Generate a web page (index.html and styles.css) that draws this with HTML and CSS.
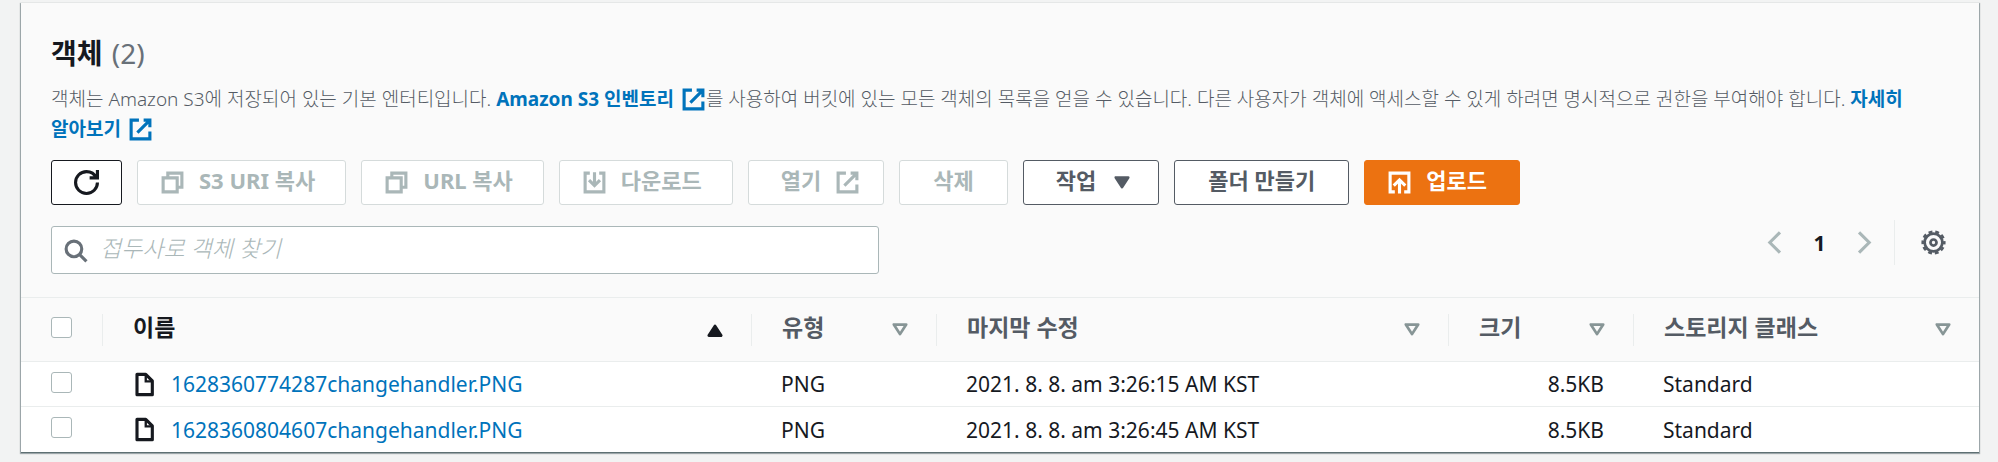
FILE: index.html
```html
<!DOCTYPE html>
<html lang="ko">
<head>
<meta charset="utf-8">
<title>객체</title>
<link rel="stylesheet" href="styles.css">
</head>
<body>
<svg class="sprite" aria-hidden="true">
  <symbol id="i-external" viewBox="0 0 16 16"><path d="M10 2h4v4.500M6 10l8-8M14 9.200V14H2V2h5"/></symbol>
  <symbol id="i-copy" viewBox="0 0 16 16"><path d="M2 5h9v9H2zM5 5V2h9v9h-3"/></symbol>
  <symbol id="i-download" viewBox="0 0 16 16"><path d="M11 2h3v12H2V2h3M8 1.500V10M4.500 6.500 8 10l3.500-3.500"/></symbol>
  <symbol id="i-upload" viewBox="0 0 16 16"><path d="M11 14h3V2H2v12h3M8 15V6.500M4.300 10 8 6.300l3.700 3.700"/></symbol>
  <symbol id="i-refresh" viewBox="0 0 16 16"><path d="M10 5h5V0M15 8c0 3.866-3.134 7-7 7s-7-3.134-7-7 3.134-7 7-7c2.790 0 5.200 1.632 6.327 4"/></symbol>
  <symbol id="i-search" viewBox="0 0 16 16"><circle cx="7" cy="7" r="5"/><path d="m15 15-4.500-4.500"/></symbol>
  <symbol id="i-file" viewBox="0 0 16 16"><path stroke-linejoin="round" d="M3.200 1.500h5.600l4.200 4.200v8.800H3.200z"/><path stroke-width="1.500" d="M8.800 1.500V6H13"/></symbol>
  <symbol id="i-caret" viewBox="0 0 16 16"><path stroke-linejoin="round" d="M3.500 4h9L8 11z"/></symbol>
  <symbol id="i-prev" viewBox="0 0 16 16"><path d="M11.500 1.500 5 8l6.500 6.500"/></symbol>
  <symbol id="i-next" viewBox="0 0 16 16"><path d="M4.500 1.500 11 8l-6.500 6.500"/></symbol>
  <symbol id="i-gear" viewBox="0 0 24 24"><circle cx="12" cy="12" r="8.500" stroke-width="2.600"/><circle cx="12" cy="12" r="10.400" stroke-width="2.400" stroke-dasharray="3.700 2.835" stroke-dashoffset="1.850"/><circle cx="12" cy="12" r="2.900" stroke-width="2.600"/></symbol>
</svg>

<main class="panel">
  <header class="panel-header">
    <h2 class="title">객체 <span class="count">(2)</span></h2>
    <p class="description">객체는 Amazon S3에 저장되어 있는 기본 엔터티입니다. <a class="info-link" href="#">Amazon S3 인벤토리 <svg class="icon"><use href="#i-external"/></svg></a>를 사용하여 버킷에 있는 모든 객체의 목록을 얻을 수 있습니다. 다른 사용자가 객체에 액세스할 수 있게 하려면 명시적으로 권한을 부여해야 합니다. <a class="info-link" href="#">자세히 알아보기 <svg class="icon"><use href="#i-external"/></svg></a></p>

    <div class="actions">
      <button class="btn btn-icon" type="button" aria-label="새로 고침"><svg class="icon"><use href="#i-refresh"/></svg></button>
      <button class="btn" type="button" disabled><svg class="icon"><use href="#i-copy"/></svg>S3 URI 복사</button>
      <button class="btn" type="button" disabled><svg class="icon"><use href="#i-copy"/></svg>URL 복사</button>
      <button class="btn" type="button" disabled><svg class="icon"><use href="#i-download"/></svg>다운로드</button>
      <button class="btn btn-trailing" type="button" disabled>열기<svg class="icon"><use href="#i-external"/></svg></button>
      <button class="btn btn-text" type="button" disabled>삭제</button>
      <button class="btn btn-trailing" type="button">작업<svg class="icon icon-caret icon-solid"><use href="#i-caret"/></svg></button>
      <button class="btn btn-text" type="button">폴더 만들기</button>
      <button class="btn btn-primary" type="button"><svg class="icon"><use href="#i-upload"/></svg>업로드</button>
    </div>

    <div class="tools">
      <label class="search">
        <svg class="icon"><use href="#i-search"/></svg>
        <input class="search-input" type="text" placeholder="접두사로 객체 찾기" aria-label="접두사로 객체 찾기">
      </label>
      <nav class="pagination" aria-label="페이지">
        <button class="page-btn" type="button" disabled aria-label="이전"><svg class="icon"><use href="#i-prev"/></svg></button>
        <button class="page-btn page-current" type="button">1</button>
        <button class="page-btn" type="button" disabled aria-label="다음"><svg class="icon"><use href="#i-next"/></svg></button>
        <button class="page-btn settings" type="button" aria-label="기본 설정"><svg class="icon"><use href="#i-gear"/></svg></button>
      </nav>
    </div>
  </header>

  <table class="objects">
    <colgroup><col class="col-check"><col><col class="col-type"><col class="col-date"><col class="col-size"><col class="col-class"></colgroup>
    <thead>
      <tr>
        <th scope="col"><div class="head"><input class="check" type="checkbox" aria-label="모두 선택"></div></th>
        <th scope="col" class="sorted"><div class="head"><span class="head-text">이름</span><svg class="icon icon-caret icon-solid icon-up"><use href="#i-caret"/></svg></div></th>
        <th scope="col"><div class="head"><span class="head-text">유형</span><svg class="icon icon-caret"><use href="#i-caret"/></svg></div></th>
        <th scope="col"><div class="head"><span class="head-text">마지막 수정</span><svg class="icon icon-caret"><use href="#i-caret"/></svg></div></th>
        <th scope="col"><div class="head"><span class="head-text">크기</span><svg class="icon icon-caret"><use href="#i-caret"/></svg></div></th>
        <th scope="col"><div class="head"><span class="head-text">스토리지 클래스</span><svg class="icon icon-caret"><use href="#i-caret"/></svg></div></th>
      </tr>
    </thead>
    <tbody>
      <tr>
        <td><input class="check" type="checkbox" aria-label="1628360774287changehandler.PNG 선택"></td>
        <td><div class="file"><svg class="icon"><use href="#i-file"/></svg><a class="file-link" href="#">1628360774287changehandler.PNG</a></div></td>
        <td>PNG</td>
        <td>2021. 8. 8. am 3:26:15 AM KST</td>
        <td class="number">8.5KB</td>
        <td>Standard</td>
      </tr>
      <tr>
        <td><input class="check" type="checkbox" aria-label="1628360804607changehandler.PNG 선택"></td>
        <td><div class="file"><svg class="icon"><use href="#i-file"/></svg><a class="file-link" href="#">1628360804607changehandler.PNG</a></div></td>
        <td>PNG</td>
        <td>2021. 8. 8. am 3:26:45 AM KST</td>
        <td class="number">8.5KB</td>
        <td>Standard</td>
      </tr>
    </tbody>
  </table>
</main>
</body>
</html>
```
FILE: styles.css
```css
* {
  box-sizing: border-box;
}

body {
  margin: 0;
  padding: 3px 19px 9px 21px;
  background: #f2f3f3;
  color: #16191f;
  font-family: "Noto Sans", "Noto Sans CJK KR", sans-serif;
  font-size: 21px;
  line-height: 28px;
}

button,
input {
  font: inherit;
  color: inherit;
}

.sprite {
  display: none;
}

.icon {
  flex: none;
  width: 25px;
  height: 25px;
  fill: none;
  stroke: currentColor;
  stroke-width: 2;
}

.icon-caret {
  width: 22px;
  height: 22px;
}

.icon-solid {
  fill: currentColor;
}

.icon-up {
  transform: rotate(180deg);
}

.panel {
  background: #fff;
  box-shadow: 0 1px 1px 1px rgba(0, 28, 36, 0.3), 0 1px 1px #879596;
}

.panel-header {
  padding: 32px 30px 23px;
  background: #fafafa;
}

.title {
  margin: 0;
  font-size: 28px;
  line-height: 36px;
}

.count {
  margin-left: 2px;
  color: #687078;
  font-weight: 400;
}

.description {
  margin: 13px 0 16px;
  color: #545b64;
  font-size: 19px;
  font-weight: 300;
  line-height: 30px;
  word-break: keep-all;
}

.info-link {
  color: #0073bb;
  font-weight: 700;
  text-decoration: none;
}

.info-link .icon {
  margin-left: 2px;
  vertical-align: -6px;
}

.actions {
  display: flex;
  flex-wrap: wrap;
  gap: 15px;
}

.btn {
  display: flex;
  align-items: center;
  gap: 14px;
  height: 45px;
  padding: 0 30px 6px 22px;
  border: 1px solid #545b64;
  border-radius: 3px;
  background: #fff;
  color: #545b64;
  font-size: 22px;
  font-weight: 700;
  white-space: nowrap;
}

.btn:disabled {
  border-color: #d5dbdb;
  color: #aab7b8;
}

.btn .icon {
  position: relative;
  top: 3px;
}

.btn-icon {
  padding: 0 22px 6px;
  border-color: #16191f;
  color: #16191f;
}

.btn-trailing {
  padding: 0 23px 6px 32px;
}

.btn-trailing .icon-caret {
  margin: 0 2px 0 1px;
}

.btn-text {
  padding: 0 33px 6px;
}

.btn-primary {
  padding: 0 32px 6px 22px;
  border-color: #ec7211;
  background: #ec7211;
  color: #fff;
}

.tools {
  display: flex;
  justify-content: space-between;
  margin-top: 15px;
}

.search {
  display: flex;
  align-items: center;
  gap: 12px;
  flex: 0 1 828px;
  height: 48px;
  margin-top: 6px;
  padding: 0 11px;
  border: 1px solid #aab7b8;
  border-radius: 3px;
  background: #fff;
  color: #687078;
}

.search-input {
  flex: 1;
  min-width: 0;
  height: 42px;
  padding: 0 0 4px;
  border: 0;
  outline: 0;
  background: none;
  color: #16191f;
  font-size: 23px;
}

.search-input::placeholder {
  color: #aab7b8;
  font-style: italic;
  font-weight: 300;
  opacity: 1;
}

.pagination {
  display: flex;
  align-items: center;
  height: 45px;
}

.page-btn {
  display: flex;
  align-items: center;
  justify-content: center;
  width: 45px;
  height: 45px;
  padding: 0;
  border: 0;
  background: none;
  color: #545b64;
}

.page-btn:disabled {
  color: #aab7b8;
}

.page-current {
  color: #16191f;
  font-weight: 700;
}

.settings {
  justify-content: flex-end;
  width: 55px;
  margin-left: 7px;
  padding-right: 3px;
  border-left: 1px solid #eaeded;
}

.objects {
  width: 100%;
  border-collapse: separate;
  border-spacing: 0;
  table-layout: fixed;
}

.col-check {
  width: 82px;
}

.col-type,
.col-size {
  width: 185px;
}

.col-date {
  width: 512px;
}

.col-class {
  width: 345px;
}

.objects th {
  height: 65px;
  padding: 0;
  border: solid #eaeded;
  border-width: 1px 0;
  background: #fafafa;
  color: #545b64;
  font-size: 23px;
  font-weight: 700;
  text-align: left;
}

.objects .sorted {
  color: #16191f;
}

.head {
  display: flex;
  align-items: center;
  justify-content: space-between;
  height: 32px;
  padding: 0 25px 0 30px;
  border-right: 1px solid #eaeded;
}

th:last-child .head {
  border-right: 0;
}

.head-text {
  padding-bottom: 6px;
}

.head .icon {
  stroke: #879596;
}

.head .icon-solid {
  stroke: currentColor;
}

.objects td {
  height: 45px;
  padding: 0 30px 0 29px;
  border-bottom: 1px solid #eaeded;
  white-space: nowrap;
}

.objects td:first-child {
  padding: 0 0 0 30px;
}

.objects tbody tr:last-child td {
  border-bottom: 0;
}

.objects .number {
  text-align: right;
}

.check {
  appearance: none;
  display: block;
  width: 21px;
  height: 21px;
  margin: 0 0 4px;
  border: 1px solid #aab7b8;
  border-radius: 3px;
  background: #fff;
}

.file {
  display: flex;
  align-items: center;
  gap: 14px;
}

.file-link {
  color: #0073bb;
  text-decoration: none;
}
```
